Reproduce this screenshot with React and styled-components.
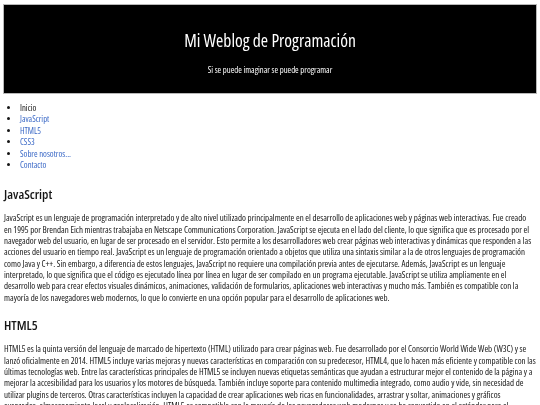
import React from "react";
import styled, { createGlobalStyle } from "styled-components";

const GlobalStyle = createGlobalStyle`
  body {
    margin: 0;
    background: #ffffff;
    color: #161616;
    font-family: "Open Sans", "DejaVu Sans Condensed", sans-serif;
    font-stretch: 75%;
    font-weight: 450;
    -webkit-font-smoothing: antialiased;
  }
`;

const links = [
  { label: "Inicio", active: true },
  { label: "JavaScript" },
  { label: "HTML5" },
  { label: "CSS3" },
  { label: "Sobre nosotros..." },
  { label: "Contacto" },
];

const posts = [
  {
    title: "JavaScript",
    text: "JavaScript es un lenguaje de programación interpretado y de alto nivel utilizado principalmente en el desarrollo de aplicaciones web y páginas web interactivas. Fue creado en\u00a01995 por Brendan Eich mientras trabajaba en Netscape Communications Corporation. JavaScript se ejecuta en el lado del cliente, lo que significa que es procesado por el navegador web del usuario, en lugar de ser procesado en el servidor. Esto permite a los desarrolladores web crear páginas web interactivas y dinámicas que responden a las acciones del usuario en tiempo real. JavaScript es un lenguaje de programación orientado a objetos que utiliza una sintaxis similar a la de otros lenguajes de programación como Java y C++. Sin embargo, a diferencia de estos lenguajes, JavaScript no requiere una compilación previa antes de ejecutarse. Además, JavaScript es un lenguaje interpretado, lo que significa que el código es ejecutado línea por línea en lugar de ser compilado en un programa ejecutable. JavaScript se utiliza ampliamente en el desarrollo web para crear efectos visuales dinámicos, animaciones, validación de formularios, aplicaciones web interactivas y mucho más. También es compatible con la mayoría de los navegadores web modernos, lo que lo convierte en una opción popular para el desarrollo de aplicaciones web.",
  },
  {
    title: "HTML5",
    text: "HTML5 es la quinta versión del lenguaje de marcado de hipertexto (HTML) utilizado para crear páginas web. Fue desarrollado por el Consorcio World Wide Web (W3C) y se lanzó oficialmente en 2014. HTML5 incluye varias mejoras y nuevas características en comparación con su predecesor, HTML4, que lo hacen más eficiente y compatible con las últimas tecnologías web. Entre las características principales de HTML5 se incluyen nuevas etiquetas semánticas que ayudan a estructurar mejor el contenido de la página y a mejorar la accesibilidad para los usuarios y los motores de búsqueda. También incluye soporte para contenido multimedia integrado, como audio y vide, sin necesidad de utilizar plugins de terceros. Otras características incluyen la capacidad de crear aplicaciones web ricas en funcionalidades, arrastrar y soltar, animaciones y gráficos avanzados, almacenamiento local y geolocalización. HTML5 es compatible con la mayoría de los navegadores web modernos y se ha convertido en el estándar para el desarrollo de sitios web.",
  },
];

function App() {
  return (
    <>
      <GlobalStyle />
      <Page>
        <Header>
          <Title>Mi Weblog de Programación</Title>
          <Tagline>Si se puede imaginar se puede programar</Tagline>
        </Header>
        <Nav>
          {links.map((link) => (
            <NavItem key={link.label} $active={link.active}>
              <a href="#">{link.label}</a>
            </NavItem>
          ))}
        </Nav>
        {posts.map((post) => (
          <Post key={post.title}>
            <PostTitle>{post.title}</PostTitle>
            <PostText>{post.text}</PostText>
          </Post>
        ))}
      </Page>
    </>
  );
}

const Page = styled.div`
  padding: 4px 4px 0;
  height: 401px;
  overflow: hidden;
  will-change: transform;
`;

const Header = styled.header`
  margin: 0 -1px;
  height: 90px;
  padding-top: 25px;
  box-sizing: border-box;
  background: #000000;
  border: 1px solid #b8b8b8;
  color: #ffffff;
  text-align: center;
`;

const Title = styled.h1`
  margin: 0;
  font-size: 17.6px;
  font-weight: 500;
  line-height: 20px;
`;

const Tagline = styled.p`
  margin: 15px 0 0;
  font-size: 8.7px;
  line-height: 10px;
`;

const Nav = styled.ul`
  margin: 9px 0 14px;
  padding-left: 16px;
  list-style: disc;
  font-size: 8.7px;
  line-height: 11.4px;
`;

const NavItem = styled.li`
  a {
    color: ${(p) => (p.$active ? "#161616" : "#3a68c6")};
    text-decoration: none;
  }
`;

const Post = styled.section`
  margin-bottom: 13.5px;
`;

const PostTitle = styled.h2`
  margin: 0 0 9px;
  font-size: 13.3px;
  font-weight: 600;
  line-height: 18px;
`;

const PostText = styled.p`
  margin: 0;
  font-size: 8.92px;
  line-height: 11.3px;
`;

export default App;
